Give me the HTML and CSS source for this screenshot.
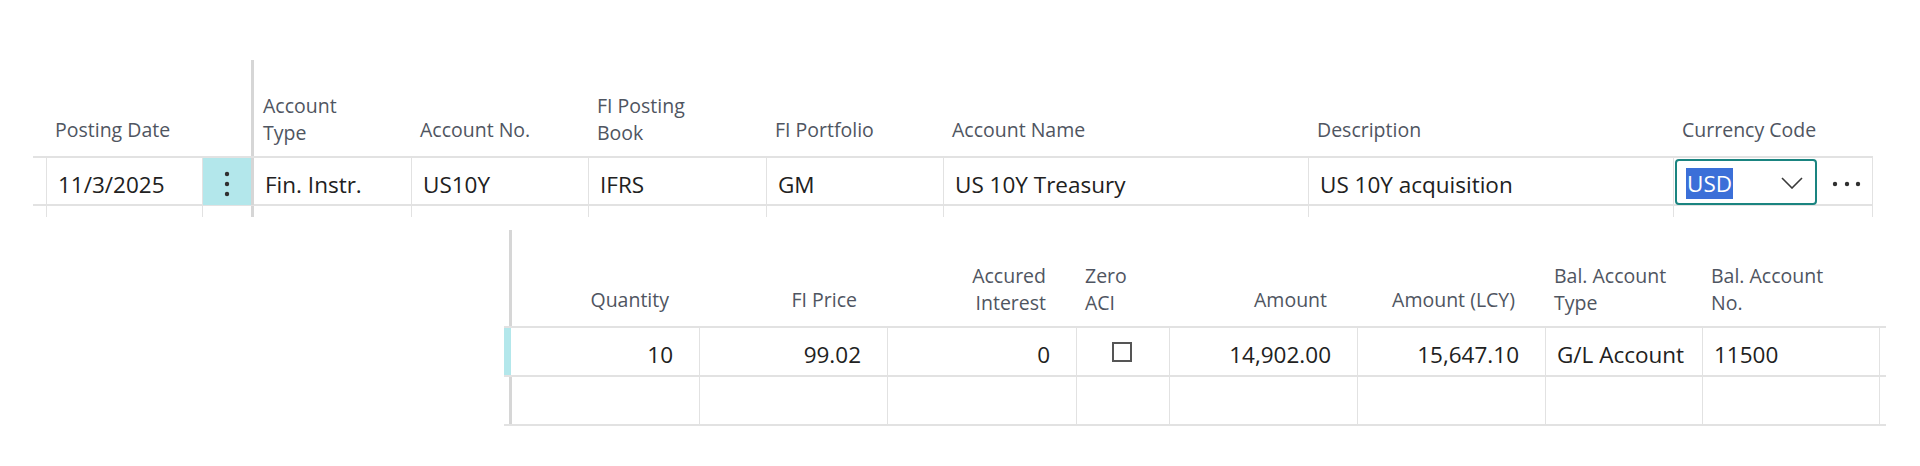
FILE: index.html
```html
<!DOCTYPE html>
<html lang="en">
<head>
<meta charset="utf-8">
<title>FI Journal</title>
<link rel="stylesheet" href="styles.css">
</head>
<body>
<div class="page">
  <div class="grid grid-top">
    <div class="row head">
      <div class="c"></div>
      <div class="h one">Posting Date</div>
      <div class="c"></div>
      <div class="h thick">Account<br>Type</div>
      <div class="h one">Account No.</div>
      <div class="h">FI Posting<br>Book</div>
      <div class="h one">FI Portfolio</div>
      <div class="h one">Account Name</div>
      <div class="h one">Description</div>
      <div class="h one">Currency Code</div>
    </div>
    <div class="row data">
      <div class="c"></div>
      <div class="d">11/3/2025</div>
      <div class="d menu">
        <svg class="vdots" width="6" height="26" viewBox="0 0 6 26"><circle cx="3" cy="3" r="2.2"/><circle cx="3" cy="13" r="2.2"/><circle cx="3" cy="23" r="2.2"/></svg>
      </div>
      <div class="d thick">Fin. Instr.</div>
      <div class="d">US10Y</div>
      <div class="d">IFRS</div>
      <div class="d">GM</div>
      <div class="d">US 10Y Treasury</div>
      <div class="d">US 10Y acquisition</div>
      <div class="d cur last">
        <div class="combo">
          <span class="sel">USD</span>
          <svg class="chev" width="22" height="12" viewBox="0 0 22 12"><polyline points="1,1 11,11 21,1"/></svg>
        </div>
        <svg class="hdots" width="30" height="6" viewBox="0 0 30 6"><circle cx="3" cy="3" r="2.2"/><circle cx="15" cy="3" r="2.2"/><circle cx="26" cy="3" r="2.2"/></svg>
      </div>
    </div>
    <div class="row data">
      <div class="c"></div>
      <div class="d"></div>
      <div class="d"></div>
      <div class="d thick"></div>
      <div class="d"></div>
      <div class="d"></div>
      <div class="d"></div>
      <div class="d"></div>
      <div class="d"></div>
      <div class="d last"></div>
    </div>
  </div>

  <div class="grid grid-bottom">
    <div class="row head">
      <div class="c"></div>
      <div class="h one num thick">Quantity</div>
      <div class="h one num">FI Price</div>
      <div class="h num">Accured<br>Interest</div>
      <div class="h">Zero<br>ACI</div>
      <div class="h one num">Amount</div>
      <div class="h one num">Amount (LCY)</div>
      <div class="h">Bal. Account<br>Type</div>
      <div class="h">Bal. Account<br>No.</div>
      <div class="c"></div>
    </div>
    <div class="row data active">
      <div class="c ind"></div>
      <div class="d num thick">10</div>
      <div class="d num">99.02</div>
      <div class="d num">0</div>
      <div class="d chk"><span class="box"></span></div>
      <div class="d num">14,902.00</div>
      <div class="d num">15,647.10</div>
      <div class="d">G/L Account</div>
      <div class="d">11500</div>
      <div class="d"></div>
    </div>
    <div class="row data">
      <div class="c"></div>
      <div class="d num thick"></div>
      <div class="d num"></div>
      <div class="d num"></div>
      <div class="d chk"></div>
      <div class="d num"></div>
      <div class="d num"></div>
      <div class="d"></div>
      <div class="d"></div>
      <div class="d"></div>
    </div>
  </div>
</div>
</body>
</html>
```

FILE: styles.css
```css
* { box-sizing: border-box; }
html, body { margin: 0; padding: 0; background: #ffffff; }
body {
  font-family: "Open Sans", "Noto Sans", "DejaVu Sans", sans-serif;
  color: #212121;
  overflow: hidden;
}
.page { padding-top: 60px; }

.grid-top { margin-left: 33px; width: 1840px; height: 157px; overflow: hidden; }
.grid-bottom { margin-left: 504px; margin-top: 13px; width: 1382px; }

.row { display: grid; }
.grid-top .row { grid-template-columns: 13px 156px 49px 160px 177px 178px 177px 365px 365px 200px; }
.grid-bottom .row { grid-template-columns: 5px 190px 188px 189px 93px 188px 188px 157px 177px 7px; }

.head { height: 98px; border-bottom: 2px solid #e2e2e2; }
.data { border-bottom: 2px solid #e2e2e2; }
.grid-top .data { height: 48px; }
.grid-bottom .data { height: 49px; }

.h {
  display: flex;
  align-items: flex-end;
  padding: 0 9px 10px 9px;
  font-size: 19.5px;
  line-height: 27px;
  color: #4f5561;
  white-space: nowrap;
}
.h.one { padding-bottom: 13px; }
.h.num { justify-content: flex-end; text-align: right; padding-right: 30px; }

.d {
  display: flex;
  align-items: center;
  padding: 6px 0 0 11px;
  font-size: 22.5px;
  line-height: 30px;
  border-left: 1px solid #e2e2e2;
  white-space: nowrap;
}
.d.num { justify-content: flex-end; padding-left: 0; padding-right: 26px; }
.thick { border-left: 3px solid #d6d6d6; }
.last { border-right: 1px solid #e2e2e2; }

.menu { background: #b3e7eb; justify-content: center; padding: 4px 0 0 0; }
.vdots, .hdots { fill: #303030; }

.ind { background: #b3e7eb; }
.active .thick { border-left: 2px solid #b3e7eb; }

.chk { justify-content: center; padding: 0 3px 0 0; }
.box { width: 20px; height: 20px; border: 2px solid #555555; }

.cur { padding: 0 0 0 1px; align-items: flex-start; }
.combo {
  width: 142px;
  height: 46px;
  margin-top: 1px;
  border: 2px solid #1a8480;
  border-radius: 4px;
  display: flex;
  align-items: center;
  padding-left: 9px;
}
.sel {
  display: inline-block;
  background: #3b6fd8;
  color: #ffffff;
  line-height: 31px;
  padding: 0 1px;
  margin-top: 2px;
}
.chev { margin-left: auto; margin-right: 12px; margin-top: 2px; fill: none; stroke: #3a3a3a; stroke-width: 1.6; }
.hdots { margin-left: 15px; margin-top: 23px; }
```
